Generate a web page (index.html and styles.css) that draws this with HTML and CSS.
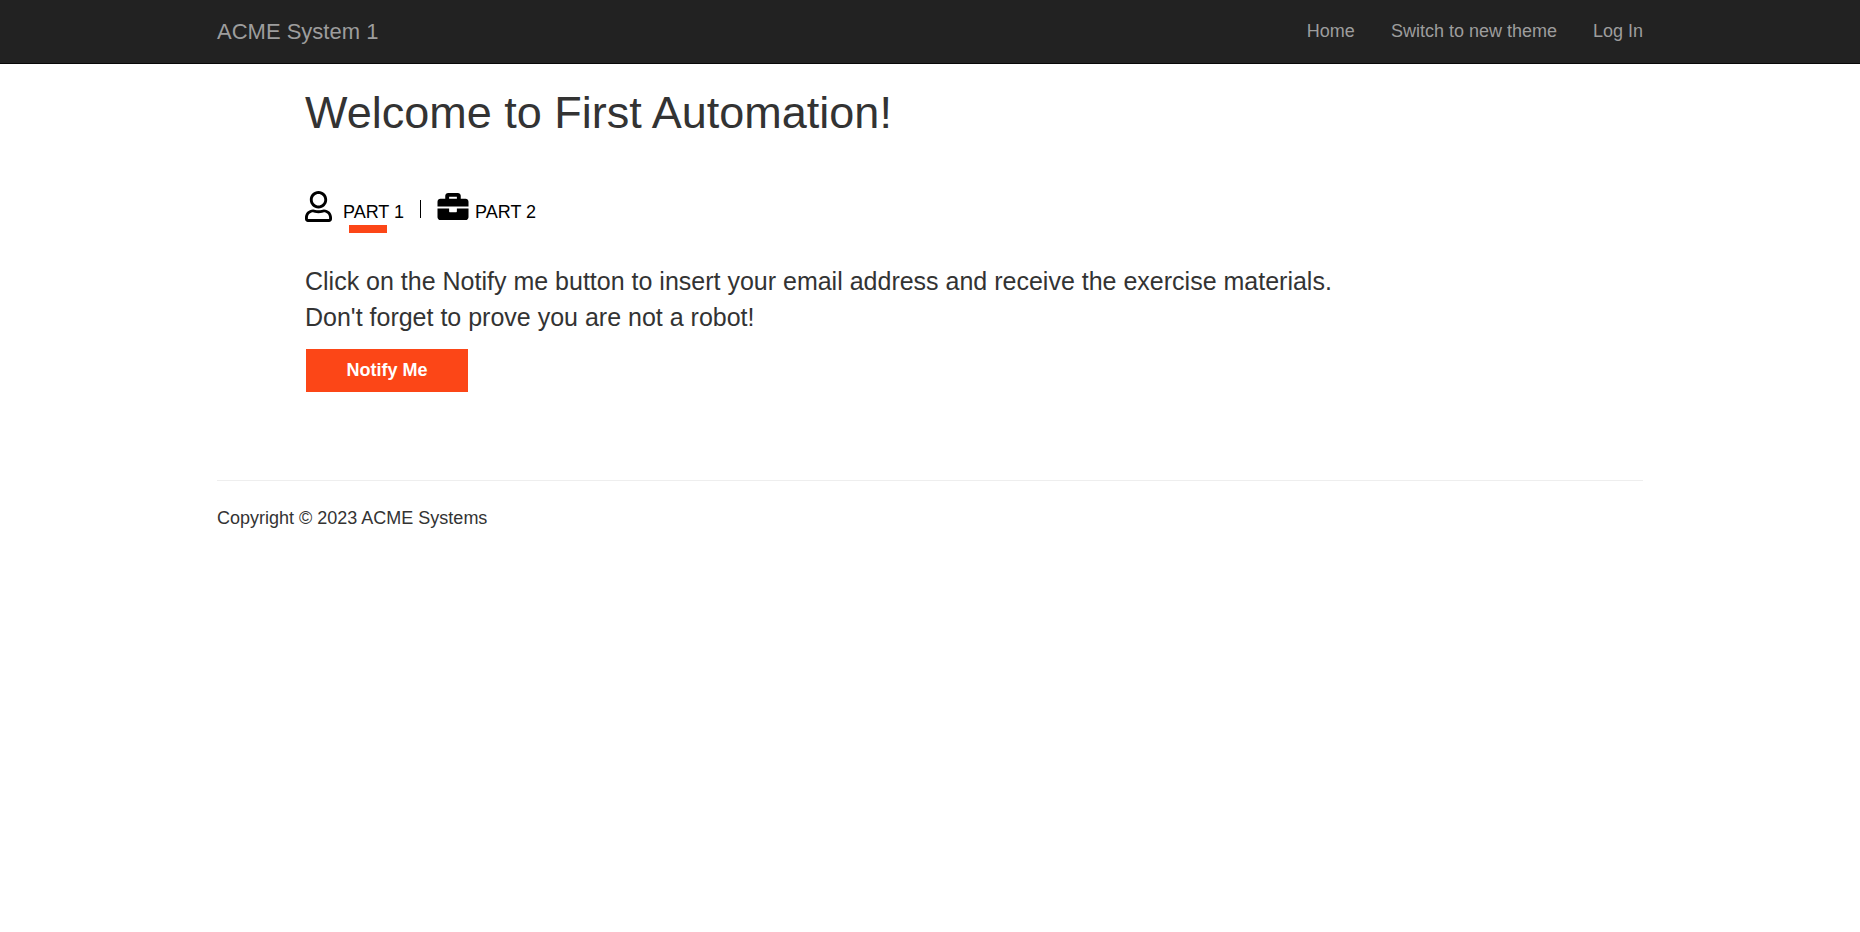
FILE: index.html
```html
<!DOCTYPE html>
<html lang="en">
<head>
<meta charset="utf-8">
<title>ACME System 1</title>
<link rel="stylesheet" href="styles.css">
</head>
<body>
<header class="navbar">
  <div class="container navbar-inner">
    <a class="brand" href="#">ACME System 1</a>
    <nav class="nav-links">
      <a href="#">Home</a>
      <a href="#">Switch to new theme</a>
      <a href="#">Log In</a>
    </nav>
  </div>
</header>
<div class="container">
  <main class="content">
    <h1 class="title">Welcome to First Automation!</h1>
    <nav class="parts">
      <a class="part part-one" href="#">
        <svg class="icon-user" viewBox="0 0 448 512" aria-hidden="true"><path d="M313.600 304c-28.700 0-42.500 16-89.600 16s-60.800-16-89.600-16C60.200 304 0 364.200 0 438.400V464c0 26.500 21.500 48 48 48h352c26.500 0 48-21.500 48-48v-25.600c0-74.200-60.200-134.400-134.400-134.400zM400 464H48v-25.600c0-47.600 38.800-86.400 86.400-86.400 14.600 0 38.300 16 89.600 16 51.700 0 74.900-16 89.600-16 47.600 0 86.400 38.800 86.400 86.400V464zM224 288c79.500 0 144-64.500 144-144S303.500 0 224 0 80 64.500 80 144s64.500 144 144 144zm0-240c52.900 0 96 43.100 96 96s-43.100 96-96 96-96-43.100-96-96 43.100-96 96-96z"/></svg>
        <span class="part-label active">PART 1</span>
      </a>
      <span class="divider"></span>
      <a class="part" href="#">
        <svg class="icon-case" viewBox="0 0 512 512" aria-hidden="true"><path d="M320 336c0 8.840-7.160 16-16 16h-96c-8.840 0-16-7.160-16-16v-48H0v144c0 25.600 22.400 48 48 48h416c25.600 0 48-22.400 48-48V288H320v48zm144-208h-80V80c0-25.600-22.400-48-48-48H176c-25.600 0-48 22.400-48 48v48H48c-25.600 0-48 22.400-48 48v80h512v-80c0-25.600-22.400-48-48-48zm-144 0H192V96h128v32z"/></svg>
        <span class="part-label">PART 2</span>
      </a>
    </nav>
    <p class="lead">Click on the Notify me button to insert your email address and receive the exercise materials.<br>Don't forget to prove you are not a robot!</p>
    <button class="notify" type="button">Notify Me</button>
  </main>
  <footer class="footer">Copyright © 2023 ACME Systems</footer>
</div>
</body>
</html>
```

FILE: styles.css
```css
* {
  box-sizing: border-box;
}

body {
  margin: 0;
  background: #fff;
  color: #333;
  font: 18px/25px "Liberation Sans", Arial, sans-serif;
}

a {
  color: inherit;
  text-decoration: none;
}

.container {
  max-width: 1464px;
  margin: 0 auto;
  padding: 0 19px;
}

.navbar {
  background: #222;
  border-bottom: 1px solid #080808;
  color: #9d9d9d;
}

.navbar-inner {
  display: flex;
  align-items: center;
  justify-content: space-between;
  min-height: 63px;
}

.brand {
  font-size: 22px;
}

.nav-links {
  display: flex;
  gap: 36px;
}

.content {
  padding: 24px 88px 88px;
}

.title {
  margin: 0;
  font-size: 45px;
  font-weight: 400;
  line-height: 50px;
}

.parts {
  display: flex;
  align-items: flex-start;
  gap: 16px;
  margin-top: 53px;
  color: #000;
}

.part {
  display: flex;
  align-items: flex-start;
  gap: 6px;
}

.part-one {
  gap: 11px;
}

.icon-user {
  width: 27px;
  height: 31px;
}

.icon-case {
  width: 32px;
  height: 31px;
}

.part-label {
  padding-top: 9px;
}

.active::after {
  content: "";
  display: block;
  width: 38px;
  height: 8px;
  margin-left: 6px;
  background: #fc4617;
}

.divider {
  width: 1px;
  height: 18px;
  margin-top: 9px;
  background: #000;
}

.lead {
  margin: 30px 0 14px;
  font-size: 25px;
  line-height: 36px;
}

.notify {
  width: 162px;
  height: 43px;
  margin-left: 1px;
  border: 0;
  background: #fc4617;
  color: #fff;
  font: bold 18px/25px "Liberation Sans", Arial, sans-serif;
}

.footer {
  padding-top: 25px;
  border-top: 1px solid #eee;
}
```
